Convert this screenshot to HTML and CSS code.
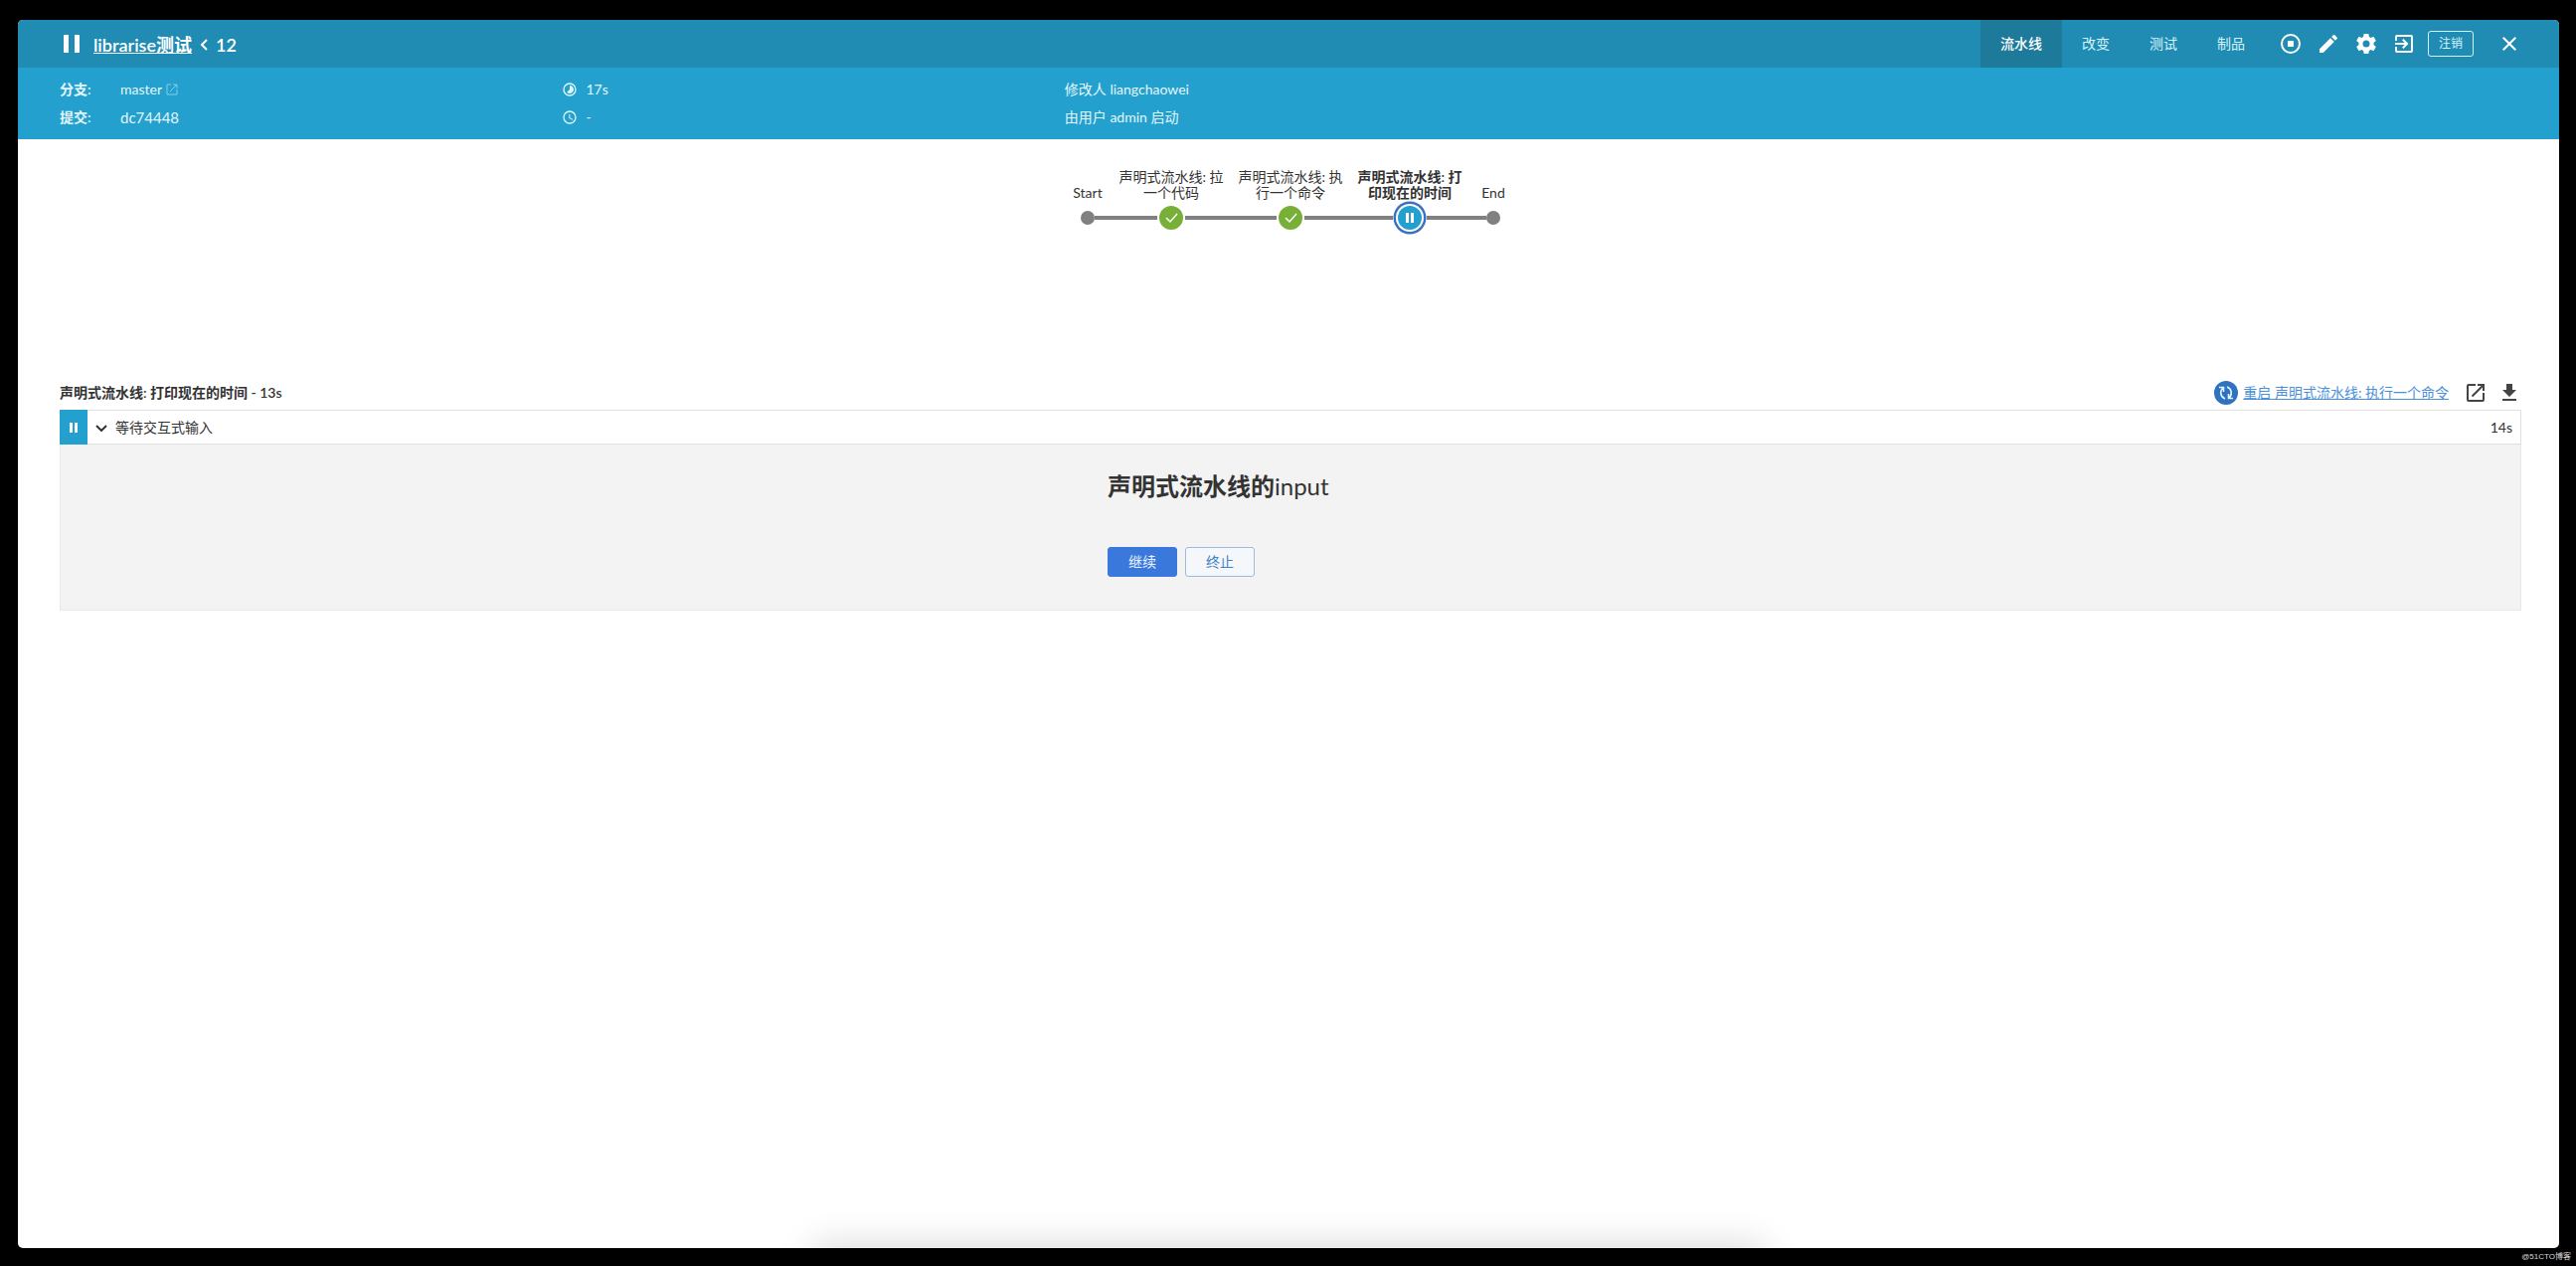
FILE: index.html
```html
<!DOCTYPE html>
<html lang="zh-CN">
<head>
<meta charset="utf-8">
<meta name="viewport" content="width=device-width, initial-scale=1">
<title>librarise测试 / 12</title>
<link rel="stylesheet" href="styles.css">
</head>
<body>
<div class="window">
  <header class="topbar">
    <svg class="status-icon" viewBox="0 0 24 24" aria-hidden="true"><path d="M4 3h5v18H4zM15 3h5v18h-5z"/></svg>
    <h1 class="title">
      <a href="#">librarise测试</a>
      <svg class="crumb" viewBox="0 0 8 14" aria-hidden="true"><path d="M7 2L2 7l5 5"/></svg>
      <span>12</span>
    </h1>
    <nav class="tabs">
      <a class="tab tab-active" href="#">流水线</a>
      <a class="tab" href="#">改变</a>
      <a class="tab" href="#">测试</a>
      <a class="tab" href="#">制品</a>
    </nav>
    <div class="tools">
      <button class="icon-button" type="button" aria-label="停止"><svg viewBox="0 0 24 24"><circle cx="12" cy="12" r="9" fill="none" stroke="currentColor" stroke-width="2"/><path d="M9 9h6v6H9z"/></svg></button>
      <button class="icon-button" type="button" aria-label="编辑"><svg viewBox="0 0 24 24"><path d="M3 17.25V21h3.75L17.81 9.94l-3.75-3.75L3 17.25zM20.71 7.04a1 1 0 0 0 0-1.41l-2.34-2.34a1 1 0 0 0-1.41 0l-1.83 1.83 3.75 3.75 1.83-1.83z"/></svg></button>
      <button class="icon-button" type="button" aria-label="设置"><svg viewBox="0 0 24 24"><path d="M19.43 12.98c.04-.32.07-.64.07-.98s-.03-.66-.07-.98l2.11-1.65c.19-.15.24-.42.12-.64l-2-3.46c-.12-.22-.39-.3-.61-.22l-2.49 1c-.52-.4-1.08-.73-1.69-.98l-.38-2.65A.49.49 0 0 0 14 2h-4c-.25 0-.46.18-.49.42l-.38 2.65c-.61.25-1.17.59-1.69.98l-2.49-1c-.23-.09-.49 0-.61.22l-2 3.46c-.13.22-.07.49.12.64l2.11 1.65c-.04.32-.07.65-.07.98s.03.66.07.98l-2.11 1.65c-.19.15-.24.42-.12.64l2 3.46c.12.22.39.3.61.22l2.49-1c.52.4 1.08.73 1.69.98l.38 2.65c.03.24.24.42.49.42h4c.25 0 .46-.18.49-.42l.38-2.65c.61-.25 1.17-.59 1.69-.98l2.49 1c.23.09.49 0 .61-.22l2-3.46c.12-.22.07-.49-.12-.64l-2.11-1.65zM12 15.5a3.5 3.5 0 1 1 0-7 3.5 3.5 0 0 1 0 7z"/></svg></button>
      <button class="icon-button" type="button" aria-label="经典界面"><svg viewBox="0 0 24 24"><path d="M10.09 15.59L11.5 17l5-5-5-5-1.41 1.41L12.67 11H3v2h9.67l-2.58 2.59zM19 3H5a2 2 0 0 0-2 2v4h2V5h14v14H5v-4H3v4a2 2 0 0 0 2 2h14a2 2 0 0 0 2-2V5a2 2 0 0 0-2-2z"/></svg></button>
    </div>
    <button class="logout" type="button">注销</button>
    <button class="icon-button close" type="button" aria-label="关闭"><svg viewBox="0 0 24 24"><path d="M19 6.41L17.59 5 12 10.59 6.41 5 5 6.41 10.59 12 5 17.59 6.41 19 12 13.41 17.59 19 19 17.59 13.41 12z"/></svg></button>
  </header>

  <section class="summary">
    <dl class="facts">
      <dt>分支:</dt>
      <dd><a class="branch" href="#">master<svg class="out" viewBox="0 0 12 12" aria-hidden="true"><path d="M5 1H1v10h10V6M7 1h4v4M11 1L4 8"/></svg></a></dd>
      <dt>提交:</dt>
      <dd class="commit">dc74448</dd>
    </dl>
    <ul class="lines">
      <li><svg class="clock" viewBox="0 0 24 24" aria-hidden="true"><path d="M16.24 7.76A5.97 5.97 0 0 0 12 6v6l-4.24 4.24a6 6 0 0 0 8.48-8.48zM12 2a10 10 0 1 0 0 20 10 10 0 0 0 0-20zm0 18a8 8 0 1 1 0-16 8 8 0 0 1 0 16z"/></svg>17s</li>
      <li><svg class="clock" viewBox="0 0 24 24" aria-hidden="true"><path d="M12 2a10 10 0 1 0 0 20 10 10 0 0 0 0-20zm0 18a8 8 0 1 1 0-16 8 8 0 0 1 0 16zm.5-13H11v6l5.25 3.15.75-1.23-4.5-2.67z"/></svg>-</li>
    </ul>
    <ul class="lines">
      <li>修改人 liangchaowei</li>
      <li>由用户 admin 启动</li>
    </ul>
  </section>

  <main class="content">
    <ol class="pipeline">
      <li class="stage stage-end"><span class="stage-name">Start</span><span class="node"><svg class="dot" viewBox="0 0 14 14" aria-hidden="true"><circle cx="7" cy="7" r="7"/></svg></span></li>
      <li class="stage"><span class="stage-name">声明式流水线: 拉一个代码</span><span class="node"><svg class="done" viewBox="0 0 28 28" aria-hidden="true"><circle cx="14" cy="14" r="13"/><path d="M9 14l4 4 7-8"/></svg></span></li>
      <li class="stage"><span class="stage-name">声明式流水线: 执行一个命令</span><span class="node"><svg class="done" viewBox="0 0 28 28" aria-hidden="true"><circle cx="14" cy="14" r="13"/><path d="M9 14l4 4 7-8"/></svg></span></li>
      <li class="stage stage-current"><span class="stage-name">声明式流水线: 打印现在的时间</span><span class="node"><svg class="paused" viewBox="0 0 34 34" aria-hidden="true"><circle cx="17" cy="17" r="16.500" fill="#3b6fc0"/><circle cx="17" cy="17" r="14" fill="#fff"/><circle cx="17" cy="17" r="12" fill="#24a0ce"/><path d="M13 12h3v10h-3zM18 12h3v10h-3z" fill="#fff"/></svg></span></li>
      <li class="stage stage-end"><span class="stage-name">End</span><span class="node"><svg class="dot" viewBox="0 0 14 14" aria-hidden="true"><circle cx="7" cy="7" r="7"/></svg></span></li>
    </ol>

    <div class="log-head">
      <h2 class="log-title">声明式流水线: 打印现在的时间 - 13s</h2>
      <a class="restart" href="#">
        <svg viewBox="0 0 24 24" aria-hidden="true"><circle cx="12" cy="12" r="12" fill="#2f72bf"/><path d="M5 6.500h4.500V11M9 7C5.500 10 6 16 11 18M19 17.500h-4.500V13M15 17C18.500 14 18 8 13 6" fill="none" stroke="#e6f4ff" stroke-width="1.600"/></svg>
        <span>重启 声明式流水线: 执行一个命令</span>
      </a>
      <button class="icon-button dark" type="button" aria-label="在新窗口打开"><svg viewBox="0 0 24 24"><path d="M19 19H5V5h7V3H5a2 2 0 0 0-2 2v14a2 2 0 0 0 2 2h14a2 2 0 0 0 2-2v-7h-2v7zM14 3v2h3.590l-9.830 9.830 1.410 1.410L19 6.410V10h2V3h-7z"/></svg></button>
      <button class="icon-button dark" type="button" aria-label="下载"><svg viewBox="0 0 24 24"><path d="M19 9h-4V3H9v6H5l7 7 7-7zM5 18v2h14v-2H5z"/></svg></button>
    </div>

    <section class="step">
      <div class="step-head">
        <span class="step-status"><svg viewBox="0 0 10 10" aria-hidden="true"><path d="M1 0h3v10H1zM6 0h3v10H6z"/></svg></span>
        <svg class="chevron" viewBox="0 0 12 8" aria-hidden="true"><path d="M1 2l5 5 5-5"/></svg>
        <span class="step-name">等待交互式输入</span>
        <span class="step-time">14s</span>
      </div>
      <form class="prompt">
        <h3 class="prompt-title"><b>声明式流水线的</b>input</h3>
        <div class="actions">
          <button class="btn btn-primary" type="button">继续</button>
          <button class="btn" type="button">终止</button>
        </div>
      </form>
    </section>
  </main>
</div>
<footer class="watermark">@51CTO博客</footer>
</body>
</html>
```
FILE: styles.css
```css
* {
  box-sizing: border-box;
}

body {
  display: flex;
  flex-direction: column;
  min-height: 100vh;
  margin: 0;
  padding: 20px 17px 0 18px;
  background: #000;
  color: #333;
  font: 14px/20px Lato, "Noto Sans CJK SC", sans-serif;
}

h1, h2, h3, dl, dd, ul, ol {
  margin: 0;
  padding: 0;
}

ul, ol {
  list-style: none;
}

button {
  font: inherit;
  cursor: pointer;
}

svg {
  display: block;
  flex: none;
  fill: currentColor;
}

.window {
  position: relative;
  flex: 1;
  overflow: hidden;
  border-radius: 5px;
  background: #fff;
}

.window::after {
  content: "";
  position: absolute;
  top: 100%;
  left: 50%;
  width: 950px;
  height: 40px;
  transform: translateX(-50%);
  box-shadow: 0 0 36px 4px rgba(0, 0, 0, 0.14);
}

/* Top bar */
.topbar {
  display: flex;
  align-items: center;
  height: 48px;
  padding: 0 38px 0 42px;
  background: #208cb3;
  color: #fff;
}

.status-icon {
  width: 24px;
  height: 24px;
}

.title {
  display: flex;
  align-items: center;
  gap: 8px;
  flex: 1;
  padding: 2px 0 0 10px;
  font-size: 18px;
  line-height: 24px;
  font-weight: 600;
}

.title a {
  color: inherit;
}

.crumb {
  width: 8px;
  height: 14px;
}

.crumb path,
.chevron path {
  fill: none;
  stroke: currentColor;
  stroke-width: 2;
}

.tabs {
  display: flex;
  align-self: stretch;
}

.tab {
  display: flex;
  align-items: center;
  padding: 0 20px;
  color: #d5f3fc;
  text-decoration: none;
}

.tab-active {
  background: #1e7a9b;
  color: #fff;
  font-weight: 500;
}

.tools {
  display: flex;
  gap: 14px;
  padding: 0 12px 0 14px;
}

.icon-button {
  display: block;
  flex: none;
  width: 24px;
  height: 24px;
  padding: 0;
  border: 0;
  background: none;
  color: inherit;
}

.logout {
  width: 46px;
  height: 26px;
  padding: 0;
  border: 1px solid #d5f3fc;
  border-radius: 3px;
  background: none;
  color: #d5f3fc;
  font-size: 12px;
  line-height: 20px;
}

.close {
  margin-left: 24px;
}

/* Run summary */
.summary {
  display: grid;
  grid-template-columns: 1fr 1fr 3fr;
  gap: 17px;
  padding: 8px 38px 8px 42px;
  background: #24a0ce;
  color: #e2f7fd;
  line-height: 28px;
}

.facts {
  display: grid;
  grid-template-columns: 61px 1fr;
}

.facts dt {
  font-weight: 600;
}

.branch {
  display: flex;
  align-items: center;
  gap: 4px;
  color: inherit;
  text-decoration: none;
}

.out {
  width: 12px;
  height: 12px;
  fill: none;
  stroke: #7fd0ec;
}

.commit {
  font-size: 15px;
}

.lines li {
  display: flex;
  align-items: center;
}

.clock {
  width: 16px;
  height: 16px;
  margin-right: 8px;
}

/* Pipeline graph */
.content {
  padding: 30px 38px 0 42px;
}

.pipeline {
  display: flex;
  justify-content: center;
  height: 213px;
}

.stage {
  width: 120px;
}

.stage-end {
  width: 48px;
}

.stage-name {
  display: flex;
  align-items: flex-end;
  justify-content: center;
  height: 32px;
  padding: 0 6px;
  line-height: 16px;
  text-align: center;
}

.stage-end .stage-name {
  padding: 0;
}

.stage-current .stage-name {
  font-weight: 600;
}

.node {
  display: flex;
  align-items: center;
  justify-content: center;
  height: 34px;
}

.node::before,
.node::after {
  content: "";
  flex: 1;
  height: 4px;
  background: #808080;
}

.stage-end:first-child .node::before,
.stage-end:last-child .node::after {
  background: none;
}

.dot {
  width: 14px;
  height: 14px;
  color: #808080;
}

.done {
  width: 28px;
  height: 28px;
}

.done circle {
  fill: #78b037;
  stroke: #fff;
  stroke-width: 2;
}

.done path {
  fill: none;
  stroke: #fff;
  stroke-width: 1.5;
}

.paused {
  width: 34px;
  height: 34px;
}

/* Log */
.log-head {
  display: flex;
  align-items: center;
  height: 24px;
}

.log-title {
  flex: 1;
  font-size: 14px;
  font-weight: 600;
}

.restart {
  display: flex;
  align-items: center;
  gap: 5px;
  margin-right: 15px;
  color: #4a90d9;
}

.restart svg {
  width: 24px;
  height: 24px;
}

.dark {
  color: #444;
}

.dark + .dark {
  margin-left: 10px;
}

.step {
  margin-top: 5px;
}

.step-head {
  display: flex;
  align-items: center;
  height: 35px;
  padding-right: 8px;
  border: 1px solid #e0e0e0;
  border-left: 0;
}

.step-status {
  display: flex;
  align-items: center;
  justify-content: center;
  width: 28px;
  height: 35px;
  background: #24a0ce;
  color: #fff;
}

.step-status svg {
  width: 10px;
  height: 10px;
}

.chevron {
  width: 12px;
  height: 8px;
  margin: 0 8px;
}

.step-name {
  flex: 1;
}

.prompt {
  padding: 24px 0 33px;
  border: 1px solid #e8e8e8;
  border-top: 0;
  background: #f3f3f3;
}

.prompt-title,
.actions {
  width: 368px;
  max-width: 100%;
  margin: 0 auto;
}

.prompt-title {
  font-size: 24px;
  line-height: 36px;
  font-weight: 400;
}

.prompt-title b {
  font-weight: 600;
}

.actions {
  display: flex;
  gap: 8px;
  margin-top: 43px;
}

.btn {
  width: 70px;
  height: 30px;
  padding: 0;
  border: 1px solid #9bbbe0;
  border-radius: 3px;
  background: #f5f7fa;
  color: #3f7fc4;
}

.btn-primary {
  border-color: #3b78dc;
  background: #3b78dc;
  color: #e6f2ff;
}

/* Page footer */
.watermark {
  margin-right: -12px;
  color: #ddd;
  font: 8px/18px "Liberation Sans", "Noto Sans CJK SC", sans-serif;
  text-align: right;
}
```
